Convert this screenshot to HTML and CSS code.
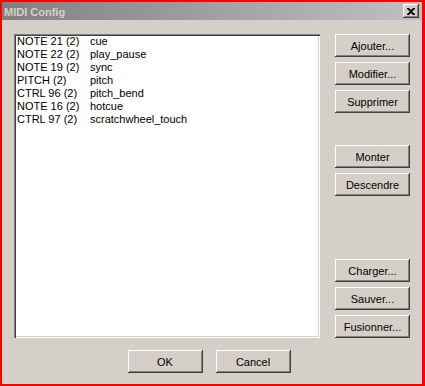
FILE: index.html
```html
<!DOCTYPE html>
<html lang="fr">
<head>
    <meta charset="UTF-8">
    <title>MIDI Config</title>
    <link rel="stylesheet" href="styles.css">
</head>
<body>

<div class="window">
    <div class="titlebar">
        <span class="title">MIDI Config</span>
        <button class="close-btn" type="button">
            <svg width="8" height="7" viewBox="0 0 8 7">
                <path d="M0 0h2l2 2 2-2h2v1l-3 2.5 3 2.5v1h-2l-2-2-2 2h-2v-1l3-2.5-3-2.5z" fill="#000"/>
            </svg>
        </button>
    </div>

    <div class="content">
        <div class="main">
            <div class="listbox">
                <div class="row"><span class="key">NOTE 21 (2)</span><span>cue</span></div>
                <div class="row"><span class="key">NOTE 22 (2)</span><span>play_pause</span></div>
                <div class="row"><span class="key">NOTE 19 (2)</span><span>sync</span></div>
                <div class="row"><span class="key">PITCH (2)</span><span>pitch</span></div>
                <div class="row"><span class="key">CTRL 96 (2)</span><span>pitch_bend</span></div>
                <div class="row"><span class="key">NOTE 16 (2)</span><span>hotcue</span></div>
                <div class="row"><span class="key">CTRL 97 (2)</span><span>scratchwheel_touch</span></div>
            </div>

            <div class="side">
                <div class="group">
                    <button class="btn">Ajouter...</button>
                    <button class="btn">Modifier...</button>
                    <button class="btn">Supprimer</button>
                </div>
                <div class="group move">
                    <button class="btn">Monter</button>
                    <button class="btn">Descendre</button>
                </div>
                <div class="group files">
                    <button class="btn">Charger...</button>
                    <button class="btn">Sauver...</button>
                    <button class="btn">Fusionner...</button>
                </div>
            </div>
        </div>

        <div class="footer">
            <button class="btn">OK</button>
            <button class="btn">Cancel</button>
        </div>
    </div>
</div>

</body>
</html>
```

FILE: styles.css
```css
html, body {
    margin: 0;
    padding: 0;
}

body {
    width: 425px;
    height: 386px;
    font-family: Tahoma, "Liberation Sans", Arial, sans-serif;
    font-size: 11px;
    color: #000;
}

.window {
    box-sizing: border-box;
    width: 425px;
    height: 386px;
    border: 2px solid #ff0000;
    border-right-width: 3px;
    background-color: #d4d0c8;
    display: flex;
    flex-direction: column;
}

.titlebar {
    height: 18px;
    display: flex;
    align-items: center;
    justify-content: space-between;
    padding: 0 3px 0 2px;
    background: linear-gradient(to right, #808080, #c0c0c0);
}

.title {
    color: #d4d0c8;
    font-weight: bold;
    font-size: 11px;
    padding-top: 1px;
}

.close-btn {
    width: 16px;
    height: 14px;
    padding: 0;
    border: none;
    background-color: #d4d0c8;
    display: flex;
    align-items: center;
    justify-content: center;
    box-shadow: inset -1px -1px #404040, inset 1px 1px #fff, inset -2px -2px #808080;
}

.content {
    flex: 1;
    display: flex;
    flex-direction: column;
    padding: 14px 12px 11px 12px;
}

.main {
    display: flex;
    gap: 15px;
    height: 304px;
}

.listbox {
    box-sizing: border-box;
    width: 306px;
    height: 304px;
    background-color: #fff;
    padding: 1px 1px;
    box-shadow: inset 1px 1px #808080, inset 2px 2px #404040, inset -1px -1px #fff, inset -2px -2px #d4d0c8;
    padding-left: 3px;
}

.row {
    display: flex;
    height: 13px;
    line-height: 13px;
    white-space: nowrap;
}

.key {
    width: 73px;
}

.side {
    display: flex;
    flex-direction: column;
}

.group {
    display: flex;
    flex-direction: column;
    gap: 5px;
}

.move {
    margin-top: 32px;
}

.files {
    margin-top: auto;
}

.btn {
    box-sizing: border-box;
    width: 75px;
    height: 23px;
    padding: 0;
    border: none;
    font-family: inherit;
    font-size: 11px;
    color: #000;
    background-color: #d4d0c8;
    box-shadow: inset -1px -1px #404040, inset 1px 1px #fff, inset -2px -2px #808080;
}

.footer {
    display: flex;
    justify-content: center;
    gap: 13px;
    margin-top: 12px;
    padding-right: 6px;
}
```
